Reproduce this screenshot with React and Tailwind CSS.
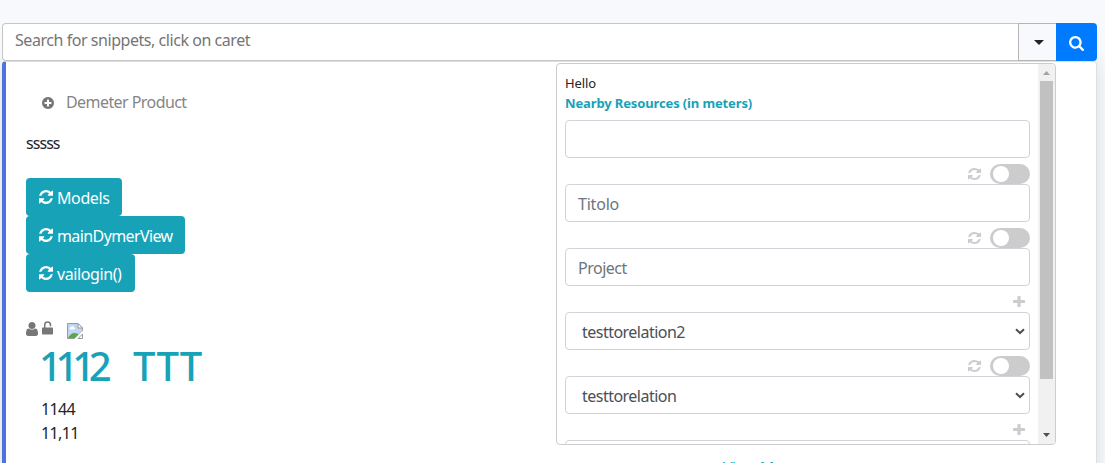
import React from "react";

const ICONS = {
  refresh: {
    box: "128 128 1536 1536",
    d: "M1639 1056q0 5-1 7-64 268-268 434.5t-478 166.5q-146 0-282.5-55t-243.5-157l-129 129q-19 19-45 19t-45-19-19-45v-448q0-26 19-45t45-19h448q26 0 45 19t19 45-19 45l-137 137q71 66 161 102t187 36q134 0 250-65t186-179q11-17 53-117 8-23 30-23h192q13 0 22.5 9.5t9.5 22.5zm25-800v448q0 26-19 45t-45 19h-448q-26 0-45-19t-19-45 19-45l138-138q-148-137-349-137-134 0-250 65t-186 179q-11 17-53 117-8 23-30 23h-199q-13 0-22.5-9.5t-9.5-22.5v-7q65-268 270-434.5t480-166.5q146 0 284 55.5t245 156.5l130-129q19-19 45-19t45 19 19 45z",
  },
  plusCircle: {
    box: "128 128 1536 1536",
    d: "M1344 960v-128q0-26-19-45t-45-19h-256v-256q0-26-19-45t-45-19h-128q-26 0-45 19t-19 45v256h-256q-26 0-45 19t-19 45v128q0 26 19 45t45 19h256v256q0 26 19 45t45 19h128q26 0 45-19t19-45v-256h256q26 0 45-19t19-45zm320-64q0 209-103 385.5t-279.5 279.5-385.5 103-385.5-103-279.5-279.5-103-385.5 103-385.5 279.5-279.5 385.5-103 385.5 103 279.5 279.5 103 385.5z",
  },
  plus: {
    box: "192 128 1408 1408",
    d: "M1600 736v192q0 40-28 68t-68 28h-416v416q0 40-28 68t-68 28h-192q-40 0-68-28t-28-68v-416h-416q-40 0-68-28t-28-68v-192q0-40 28-68t68-28h416v-416q0-40 28-68t68-28h192q40 0 68 28t28 68v416h416q40 0 68 28t28 68z",
  },
  search: {
    box: "64 128 1664 1664",
    d: "M1216 832q0-185-131.5-316.5t-316.5-131.5-316.5 131.5-131.5 316.5 131.5 316.5 316.5 131.5 316.5-131.5 131.5-316.5zm512 832q0 52-38 90t-90 38q-54 0-90-38l-343-342q-179 124-399 124-143 0-273.5-55.5t-225-150-150-225-55.5-273.5 55.5-273.5 150-225 225-150 273.5-55.5 273.5 55.5 225 150 150 225 55.5 273.5q0 220-124 399l343 343q37 37 37 90z",
  },
  user: {
    box: "256 128 1280 1536",
    d: "M1536 1399q0 109-62.5 187t-150.5 78h-854q-88 0-150.5-78t-62.5-187q0-85 8.5-160.5t31.5-152 58.5-131 94-89 134.5-34.5q131 128 313 128t313-128q76 0 134.5 34.5t94 89 58.5 131 31.5 152 8.5 160.5zm-256-887q0 159-112.5 271.5t-271.5 112.5-271.5-112.5-112.5-271.5 112.5-271.5 271.5-112.5 271.5 112.5 112.5 271.5z",
  },
};

function Icon({ name, className }) {
  return (
    <svg viewBox={ICONS[name].box} fill="currentColor" className={"shrink-0 " + className} preserveAspectRatio="none">
      <path d={ICONS[name].d} />
    </svg>
  );
}

function UnlockIcon() {
  return (
    <svg viewBox="0 0 11 14" className="ml-1 h-[14px] w-[11px] shrink-0">
      <path d="M2.700 7V4a2.900 2.900 0 0 1 5.800 0v.8" fill="none" stroke="#777" strokeWidth="1.500" strokeLinecap="round" />
      <rect x="0" y="6.500" width="11" height="7" rx="0.700" fill="#777" />
    </svg>
  );
}

function BrokenImage() {
  return (
    <svg viewBox="0 0 16 16" className="mt-[2px] ml-[14px] h-4 w-4 shrink-0">
      <path d="M.5.5h10.500l4.500 4.500v3L8 15.500H.5z" fill="#c3d5f5" stroke="#9a9a9a" />
      <path d="M11 .5V5h4.500z" fill="#fff" stroke="#9a9a9a" />
      <path d="M3 6.500a1.600 1.600 0 0 1 1-2.600 1.800 1.800 0 0 1 3.300.8 1 1 0 0 1 .2 1.800z" fill="#fff" />
      <path d="M1 15c1.300-3 4-5 6.500-5 2 0 3.300.8 4 1.500L8 15z" fill="#56ab3c" />
      <path d="M7.500 16 16 7.500v2L9.500 16z" fill="#fff" />
      <path d="M15.500 11v4.500H11z" fill="#fff" stroke="#9a9a9a" />
    </svg>
  );
}

function ActionButton({ children, className }) {
  return (
    <button className={"flex h-[38px] items-center rounded-[4px] bg-[#17a2b8] pl-[13px] text-white " + className}>
      <Icon name="refresh" className="mr-1 h-[14px] w-[14px]" />
      <span className="pt-[2px] whitespace-nowrap">{children}</span>
    </button>
  );
}

function ToggleRow() {
  return (
    <div className="flex h-[26px] items-end justify-end">
      <Icon name="refresh" className="mr-[9px] mb-[4px] h-3 w-[13px] text-[#ccc]" />
      <span className="flex h-5 w-10 items-center rounded-full bg-[#ccc] pl-[3px]">
        <span className="h-4 w-4 rounded-full bg-white" />
      </span>
    </div>
  );
}

function PlusRow() {
  return (
    <div className="flex h-[26px] justify-end pt-[10px] pr-[5px]">
      <Icon name="plus" className="h-[11px] w-3 text-[#ccc]" />
    </div>
  );
}

function Field({ children }) {
  return (
    <div className="flex h-[38px] items-center rounded-[4px] border border-[#ced4da] bg-white px-3 pt-[2px] text-[#6c757d]">
      {children}
    </div>
  );
}

function SelectField({ children }) {
  return (
    <div className="flex h-[38px] items-center justify-between rounded-[4px] border border-[#ced4da] bg-white pr-1 pl-4 text-[#495057]">
      <span className="pt-[2px] tracking-[-0.520px]">{children}</span>
      <svg viewBox="0 0 10 7" className="h-[7px] w-[10px]">
        <path d="M1 1.200 5 5l4-3.800" fill="none" stroke="#495057" strokeWidth="2" />
      </svg>
    </div>
  );
}

function Scrollbar() {
  return (
    <div className="flex w-[17px] shrink-0 flex-col items-center bg-[#f1f1f1]">
      <svg viewBox="0 0 17 17" className="h-[17px] w-[17px] shrink-0">
        <path d="M5 11h7L8.500 7z" fill="#a3a3a3" />
      </svg>
      <div className="h-[298px] w-[13px] bg-[#c1c1c1]" />
      <svg viewBox="0 0 17 17" className="mt-auto h-[17px] w-[17px] shrink-0">
        <path d="M5 6h7L8.500 10z" fill="#505050" />
      </svg>
    </div>
  );
}

export default function App() {
  return (
    <div className="flex h-[463px] w-[1105px] flex-col overflow-hidden bg-[#f8f9fc] pt-[23px] pl-[2px] font-['Noto_Sans','Open_Sans',sans-serif] text-[16px] leading-6 text-[#212529]">
      <div className="relative z-10 flex h-[38px] w-[1095px] shrink-0">
        <div className="flex w-[1016px] items-center rounded-l-[4px] border border-r-0 border-[#c6c6c6] bg-white pb-1 pl-3 text-[#757575]">
          <span className="tracking-[-0.450px]">Search for snippets, click on caret</span>
        </div>
        <div className="flex w-[38px] items-center justify-center border border-r-0 border-[#b5b5b5] bg-[#f8f9fc] pl-[3px]">
          <svg viewBox="0 0 10 5" className="h-[5px] w-[10px]">
            <path d="M0 0h10L5 5z" fill="#212529" />
          </svg>
        </div>
        <button className="flex w-[41px] items-center justify-center rounded-r-[4px] bg-[#007bff] text-white">
          <Icon name="search" className="mt-[2px] h-[15px] w-[15px]" />
        </button>
      </div>
      <div className="flex h-[420px] w-[1095px] shrink-0 rounded-t-[4px] border border-l-4 border-[#dddfe6] border-l-[#4e73df] bg-white shadow-[0_2px_20px_rgba(58,59,69,0.15)]">
        <div className="flex w-[550px] shrink-0 flex-col items-start pl-5">
          <div className="mt-7 flex h-6 items-center pl-4 text-[#858585]">
            <Icon name="plusCircle" className="mt-px h-3 w-3 text-[#777]" />
            <span className="ml-3 tracking-[-0.570px] whitespace-nowrap">Demeter Product</span>
          </div>
          <div className="mt-[17px] h-6 tracking-[-0.950px]">sssss</div>
          <div className="mt-[23px] flex flex-col items-start">
            <ActionButton className="w-24 tracking-[-0.400px]">Models</ActionButton>
            <ActionButton className="w-[159px] tracking-[-0.600px]">mainDymerView</ActionButton>
            <ActionButton className="w-[109px] tracking-[-0.400px]">vailogin()</ActionButton>
          </div>
          <div className="mt-[29px] flex h-[26px] items-start">
            <Icon name="user" className="mt-[1px] h-[14px] w-3 text-[#777]" />
            <UnlockIcon />
            <BrokenImage />
          </div>
          <div className="-mt-[2px] flex h-[49px] pl-[13px] text-[40px] leading-[42px] font-medium text-[#17a2b8]">
            <span className="w-[94px] tracking-[-6.300px]">1112</span>
            <span className="tracking-[0.100px]">TTT</span>
          </div>
          <div className="mt-[3px] pl-[15px] tracking-[-0.650px]">1144</div>
          <div className="pl-[15px] tracking-[-0.650px]">11,11</div>
        </div>
        <div className="w-[500px] pt-[1px]">
          <div className="flex h-[382px] overflow-hidden rounded-[4px] border border-[#ccc]">
            <div className="flex-1 overflow-hidden pt-[9px] pr-2 pl-2">
              <div className="text-[13px] leading-5 tracking-[-0.100px]">Hello</div>
              <div className="text-[13px] leading-5 font-bold tracking-[-0.130px] text-[#17a2b8]">Nearby Resources (in meters)</div>
              <div className="mt-[7px]">
                <Field />
                <ToggleRow />
                <Field><span className="tracking-[-0.200px]">Titolo</span></Field>
                <ToggleRow />
                <Field><span className="tracking-[-0.500px]">Project</span></Field>
                <PlusRow />
                <SelectField>testtorelation2</SelectField>
                <ToggleRow />
                <SelectField>testtorelation</SelectField>
                <PlusRow />
                <Field />
              </div>
            </div>
            <Scrollbar />
          </div>
          <div className="mt-[11px] pl-[167px] tracking-[-0.500px] text-[#17a2b8]">View More</div>
        </div>
      </div>
    </div>
  );
}
